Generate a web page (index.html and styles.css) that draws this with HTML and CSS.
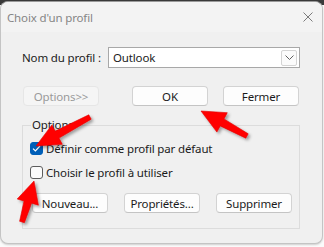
FILE: index.html
```html
<!DOCTYPE html>
<html lang="fr">
<head>
<meta charset="utf-8">
<link rel="stylesheet" href="styles.css">
</head>
<body>
<div class="window">
  <div class="titlebar">
    <span class="title">Choix d'un profil</span>
    <svg class="close" width="10" height="10" viewBox="0 0 10 10"><path d="M0.5 0.5L9.5 9.5M9.5 0.5L0.5 9.5" stroke="#7a7a7a" stroke-width="1"/></svg>
  </div>
  <div class="content">
    <div class="row-name">
      <span class="label">Nom du profil :</span>
      <div class="combo">
        <span class="combo-text">Outlook</span>
        <span class="combo-btn"><svg width="9" height="6" viewBox="0 0 9 6"><path d="M0.5 0.5L4.5 4.5L8.5 0.5" fill="none" stroke="#606060" stroke-width="1"/></svg></span>
      </div>
    </div>
    <div class="row-buttons">
      <button class="btn disabled">Options&gt;&gt;</button>
      <button class="btn ok">OK</button>
      <button class="btn">Fermer</button>
    </div>
    <div class="group">
      <div class="legend">Options</div>
      <div class="check-row">
        <span class="check checked"><svg width="9" height="7" viewBox="0 0 9 7"><path d="M1 3.6L3.4 6L8 1" fill="none" stroke="#fff" stroke-width="1.2"/></svg></span>
        <span>Définir comme profil par défaut</span>
      </div>
      <div class="check-row second">
        <span class="check"></span>
        <span>Choisir le profil à utiliser</span>
      </div>
      <div class="group-buttons">
        <button class="btn">Nouveau...</button>
        <button class="btn">Propriétés...</button>
        <button class="btn">Supprimer</button>
      </div>
    </div>
  </div>
</div>
<svg class="arrows" width="324" height="247" viewBox="0 0 324 247">
  <defs>
    <filter id="sh" x="-30%" y="-30%" width="160%" height="160%">
      <feDropShadow dx="2" dy="2" stdDeviation="1.8" flood-color="#000" flood-opacity="0.35"/>
    </filter>
  </defs>
  <g fill="#ff0000" filter="url(#sh)" stroke="#e00000" stroke-width="0.6" stroke-linejoin="round">
    <polygon points="91.2,119.2 59,138.1 62.3,144.3 36,146 51.9,124.9 55.2,131.1 88.8,114.8"/>
    <polygon points="248.2,133.8 224,118.9 227.3,112.7 201,111 216.9,132.1 220.2,125.9 245.8,138.2"/>
    <polygon points="24.4,222.7 31.6,203.2 38.4,205.2 34,181 17.2,199 24,201 19.6,221.3"/>
  </g>
</svg>
</body>
</html>
```
FILE: styles.css
```css
* { box-sizing: border-box; }
html, body { margin: 0; padding: 0; }
body {
  width: 324px;
  height: 247px;
  overflow: hidden;
  background: linear-gradient(#3a3a3a 0 5px, #fbfbfb 5px);
  font-family: "Noto Sans", "Open Sans", sans-serif;
  font-size: 11.5px;
  letter-spacing: -0.15px;
  color: #1b1b1b;
  position: relative;
}
.window {
  margin-top: 1px;
  width: 323px;
  height: 243px;
  background: #f0f0f0;
  border: 1px solid #c4c4c4;
  border-top-color: #9a9a9a;
  border-radius: 8px;
  box-shadow: 0 1px 2px rgba(0,0,0,0.18);
  overflow: hidden;
}
.titlebar {
  height: 30px;
  background: #f3f3f3;
  display: flex;
  align-items: center;
  justify-content: space-between;
  padding: 0 8px 0 6px;
}
.title {
  color: #858585;
  font-size: 11.5px;
}
.close { margin-right: 1px; }
.content {
  padding: 15px 0 0 21px;
}
.row-name {
  display: flex;
  align-items: center;
  height: 21px;
}
.label {
  width: 86px;
  flex: none;
}
.combo {
  width: 192px;
  height: 21px;
  background: #fff;
  border: 1px solid #a8a8a8;
  display: flex;
  align-items: center;
  justify-content: space-between;
  padding: 0 2px 0 4px;
}
.combo-btn {
  width: 16px;
  height: 16px;
  border: 1px solid #d4d4d4;
  border-radius: 2px;
  background: #fbfbfb;
  display: flex;
  align-items: center;
  justify-content: center;
}
.row-buttons {
  display: flex;
  margin-top: 18px;
  padding-left: 1px;
}
.btn {
  width: 76px;
  height: 20px;
  font: inherit;
  letter-spacing: inherit;
  color: #1b1b1b;
  background: #fdfdfd;
  border: 1px solid #d3d3d3;
  border-bottom-color: #c4c4c4;
  border-radius: 4px;
  padding: 0;
  line-height: 17px;
}
.btn.disabled {
  color: #9a9a9a;
  background: #f5f5f5;
  border-color: #e6e6e6;
}
.btn.ok { margin-left: 33px; }
.row-buttons .btn:last-child { margin-left: 15px; }
.group {
  margin-top: 19px;
  width: 278px;
  height: 104px;
  border: 1px solid #dcdcdc;
  padding: 0 0 0 7px;
}
.legend {
  width: fit-content;
  margin: -9px 0 0 1px;
  padding: 0 1px;
  background: #f0f0f0;
  line-height: 16px;
}
.check-row {
  display: flex;
  align-items: center;
  height: 16px;
  margin-top: 7px;
  gap: 3px;
}
.check-row.second { margin-top: 8px; }
.check {
  width: 13px;
  height: 13px;
  border: 1px solid #5d5d5d;
  border-radius: 3px;
  background: #fbfbfb;
  display: flex;
  align-items: center;
  justify-content: center;
}
.check.checked {
  background: #005fb8;
  border-color: #005fb8;
}
.group-buttons {
  display: flex;
  gap: 16px;
  margin-top: 13px;
  padding-left: 2px;
}
.arrows {
  position: absolute;
  left: 0;
  top: 0;
  pointer-events: none;
}
```
